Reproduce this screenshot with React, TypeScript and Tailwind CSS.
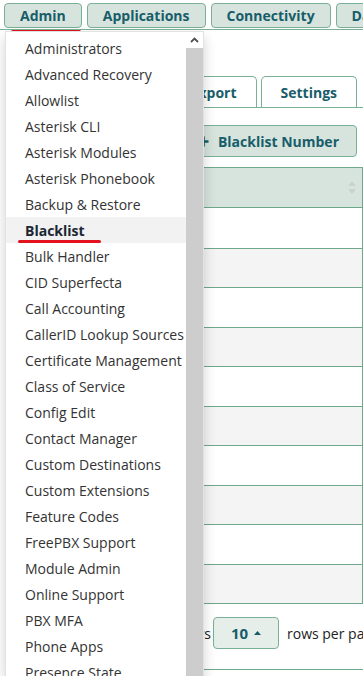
import React from 'react'

const menuItems = [
  'Administrators',
  'Advanced Recovery',
  'Allowlist',
  'Asterisk CLI',
  'Asterisk Modules',
  'Asterisk Phonebook',
  'Backup & Restore',
  'Blacklist',
  'Bulk Handler',
  'CID Superfecta',
  'Call Accounting',
  'CallerID Lookup Sources',
  'Certificate Management',
  'Class of Service',
  'Config Edit',
  'Contact Manager',
  'Custom Destinations',
  'Custom Extensions',
  'Feature Codes',
  'FreePBX Support',
  'Module Admin',
  'Online Support',
  'PBX MFA',
  'Phone Apps',
  'Presence State',
]

const navItems = ['Admin', 'Applications', 'Connectivity', 'Dashboard']

// heights include the 1px bottom border so the lines land where the screenshot has them
const rowHeights = ['h-[41px]', 'h-[39px]', 'h-[40px]', 'h-[39px]', 'h-[40px]', 'h-[39px]', 'h-[40px]', 'h-[39px]', 'h-[40px]', 'h-[39px]']

function SortIcon() {
  return (
    <svg width="8" height="13" viewBox="0 0 8 13" className="shrink-0">
      <path d="M4 0 L8 5 H0 Z" fill="#c9d3ce" />
      <path d="M4 13 L8 8 H0 Z" fill="#c9d3ce" />
    </svg>
  )
}

function Dropdown() {
  return (
    <div className="absolute left-[5px] top-[31px] bottom-0 w-[199px] flex bg-white border border-[#e2e2e2] border-b-0 shadow-[0_6px_12px_rgba(0,0,0,0.18)]">
      <ul className="flex-1 overflow-hidden pt-[3px] relative">
        {menuItems.map((item) => (
          <li
            key={item}
            className={
              item === 'Blacklist'
                ? 'h-[26px] flex items-center pl-[19px] bg-[#f2f2f2] font-bold text-[#1c2733] text-[14px] whitespace-nowrap'
                : 'h-[26px] flex items-center pl-[19px] text-[#333] text-[14px] whitespace-nowrap'
            }
          >
            {item}
          </li>
        ))}
        <span className="absolute left-[12px] top-[208px] w-[83px] h-[3px] rounded-full bg-[#e3121c]" />
      </ul>
      <div className="w-[17px] flex flex-col">
        <div className="h-[16px] flex items-center justify-center bg-white">
          <svg width="9" height="6" viewBox="0 0 9 6">
            <path d="M1 5 L4.5 1.5 L8 5" fill="none" stroke="#505050" strokeWidth="1.8" />
          </svg>
        </div>
        <div className="flex-1 bg-[#cdcdcd]" />
      </div>
    </div>
  )
}

export default function App() {
  return (
    <div className="relative w-[363px] h-[676px] overflow-hidden bg-white font-['Open_Sans',sans-serif]">
      <nav className="flex gap-[5px] pl-[4px] pt-[3px] pb-[1px] border-b border-[#7ab196]">
        {navItems.map((item) => (
          <button
            key={item}
            className="h-[25px] shrink-0 px-[15px] rounded-[4px] border border-[#7ab196] bg-[#d6e4dd] text-[#185d6a] text-[14px] font-bold leading-none whitespace-nowrap"
          >
            {item}
          </button>
        ))}
      </nav>
      <span className="absolute left-[11px] top-[30px] w-[70px] h-[3px] rounded-full bg-[#e3121c]" />

      <main className="pl-[6px]">
        <div className="mt-[46px] flex justify-end gap-[4px] pr-[6px] border-b border-[#7ab196]">
          <div className="h-[31px] flex items-center px-[19px] rounded-t-[5px] border border-b-0 border-[#7ab196] bg-white text-[#185d6a] text-[14px] font-bold whitespace-nowrap">
            Import/Export
          </div>
          <div className="h-[31px] flex items-center px-[19px] rounded-t-[5px] border border-b-0 border-[#7ab196] bg-white text-[#185d6a] text-[14px] font-bold whitespace-nowrap">
            Settings
          </div>
        </div>

        <div className="mt-[17px] flex justify-end pr-[6px]">
          <button className="h-[32px] flex items-center gap-[9px] px-[17px] rounded-[4px] border border-[#7ab196] bg-[#d6e4dd] text-[#185d6a] text-[14px] font-bold whitespace-nowrap">
            <svg width="11" height="11" viewBox="0 0 11 11">
              <path d="M5.5 0.5 V10.5 M0.5 5.5 H10.5" stroke="#185d6a" strokeWidth="2.6" />
            </svg>
            Blacklist Number
          </button>
        </div>

        <div className="mt-[10px] border border-b-0 border-[#6ea98c]">
          <div className="h-[40px] flex items-center justify-end pr-[6px] bg-[#d6e4dd] border-b border-[#6ea98c]">
            <SortIcon />
          </div>
          {rowHeights.map((h, i) => (
            <div
              key={i}
              className={`${h} border-b border-[#6ea98c] ${i % 2 === 0 ? 'bg-white' : 'bg-[#f4f4f4]'}`}
            />
          ))}
        </div>

        <div className="mt-[13px] flex items-center whitespace-nowrap text-[14px] text-[#222]">
          <span className="w-[205px] shrink-0 text-right">rows</span>
          <button className="ml-[2px] h-[32px] w-[66px] shrink-0 flex items-center justify-center gap-[6px] rounded-[4px] border border-[#7ab196] bg-[#e5eee9] text-[#185d6a] text-[15px] font-bold">
            10
            <svg width="7" height="4" viewBox="0 0 7 4">
              <path d="M3.5 0 L7 4 H0 Z" fill="#185d6a" />
            </svg>
          </button>
          <span className="ml-[8px] shrink-0">rows per page</span>
        </div>

        <div className="mt-[20px] border-t border-[#6ea98c]" />
      </main>

      <Dropdown />
    </div>
  )
}
